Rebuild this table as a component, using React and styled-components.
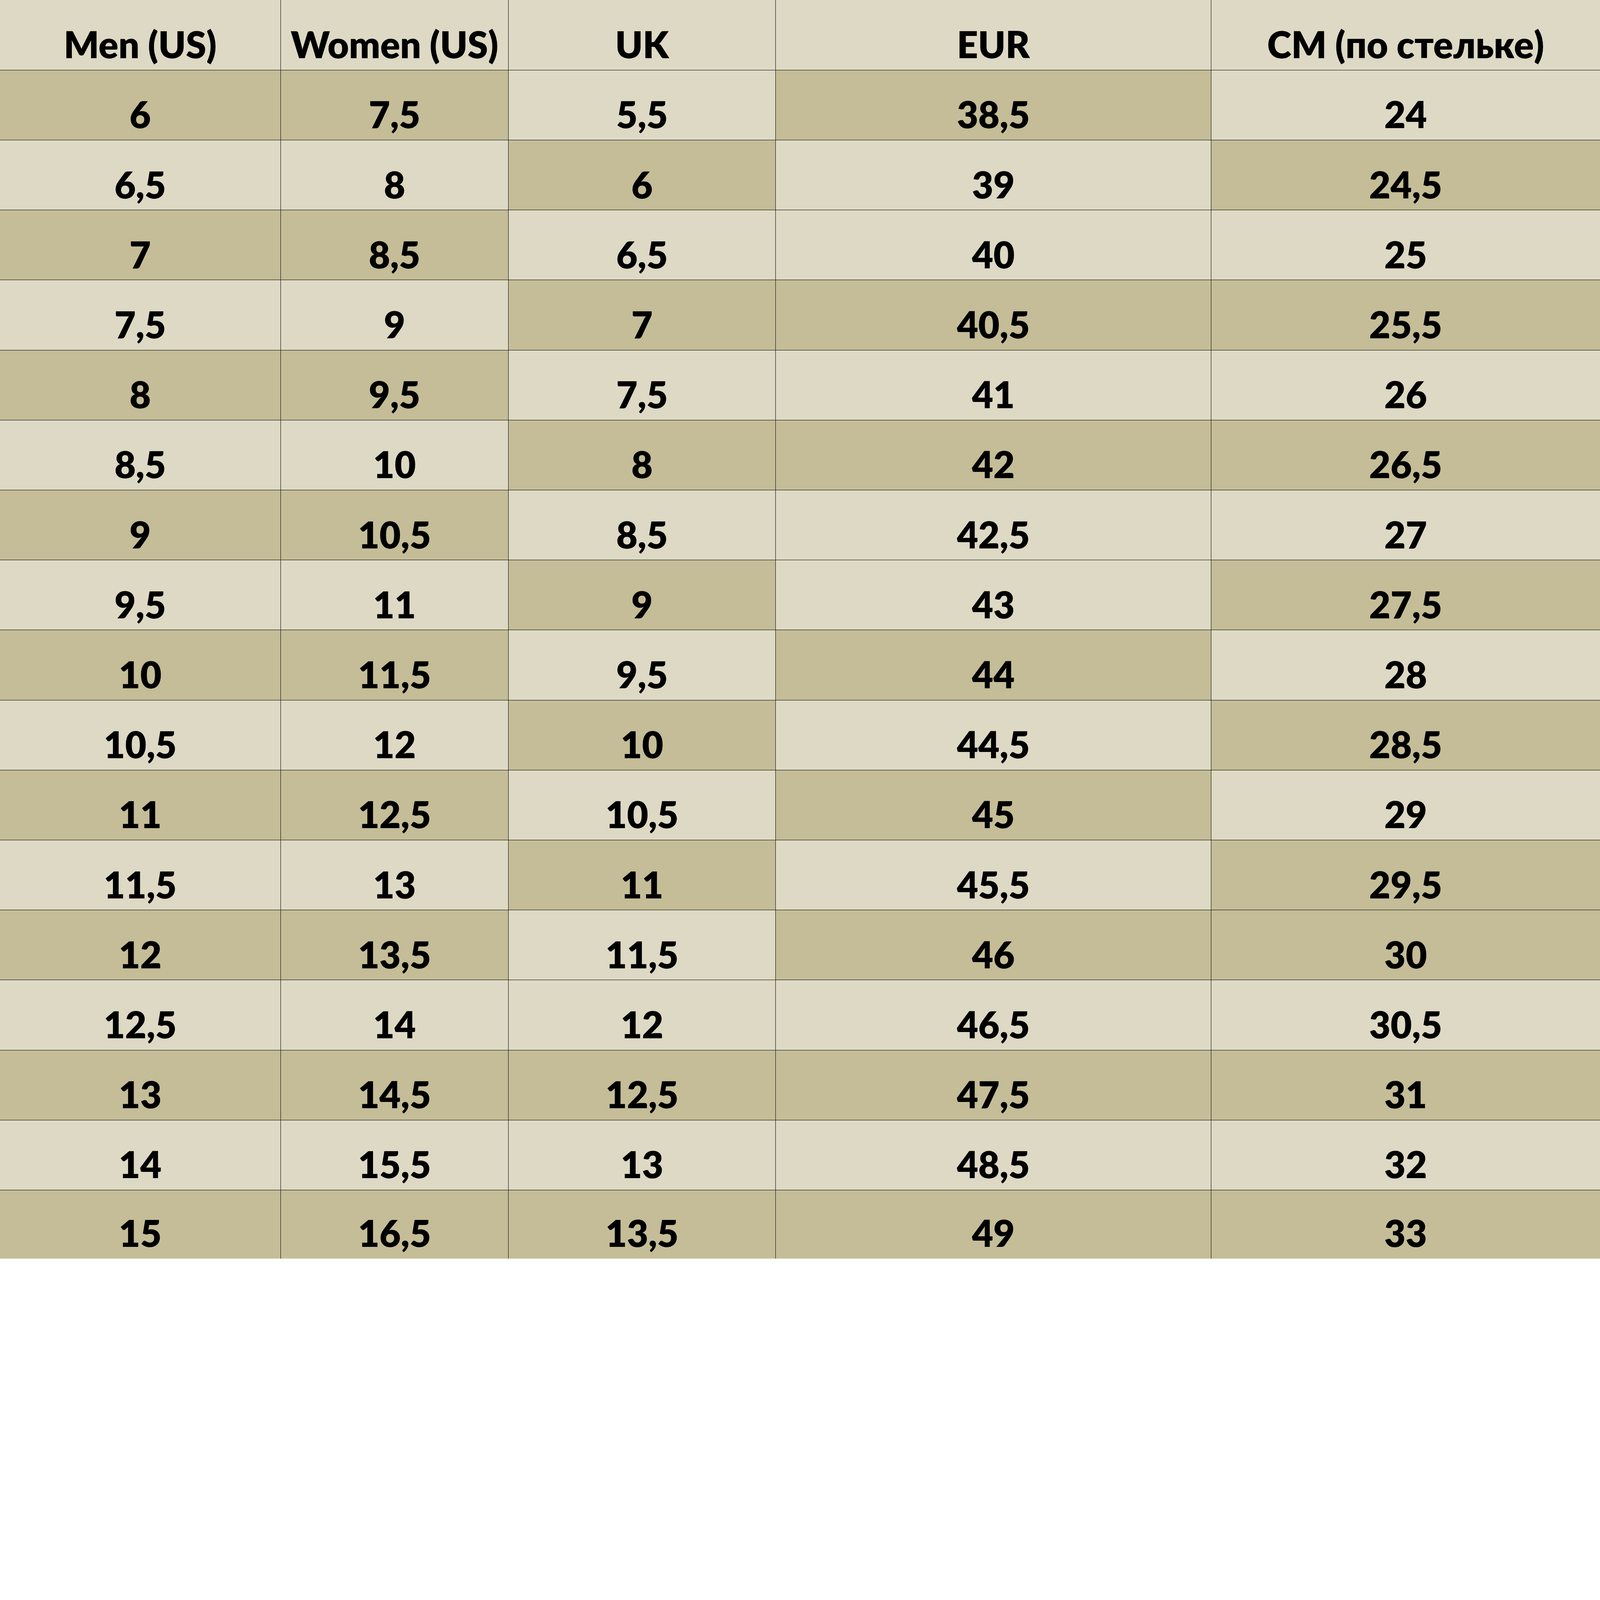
import React from "react";
import styled, { createGlobalStyle } from "styled-components";

const GlobalStyle = createGlobalStyle`
  html, body {
    margin: 0;
    padding: 0;
    background: #fff;
  }
  body {
    font-family: Lato, "Noto Sans", "DejaVu Sans", sans-serif;
  }
`;

const LIGHT = "#DDD9C4";
const DARK = "#C4BD97";

// ширины колонок как в исходной таблице (пропорции)
const Sheet = styled.div`
  display: grid;
  width: 100%;
  grid-template-columns: 1067fr 866fr 1015fr 1655fr 1477fr;
  grid-template-rows: 179.9px repeat(16, 179.2px) 175.2px;
`;

const Cell = styled.div`
  box-sizing: border-box;
  display: flex;
  align-items: flex-end;
  justify-content: center;
  min-width: 0;
  padding-bottom: 18.3px;
  background: ${(p) => (p.$dark ? DARK : LIGHT)};
  border-right: ${(p) => (p.$lastCol ? "none" : "1px solid #000")};
  border-bottom: ${(p) => (p.$lastRow ? "none" : "1px solid #000")};
  color: #000;
  font-family: Lato, "Noto Sans", sans-serif;
  font-weight: 800;
  font-size: 94.3px;
  line-height: 1;
  white-space: nowrap;
`;

const headers = ["Men (US)", "Women (US)", "UK", "EUR", "CM (по стельке)"];

const rows = [
  ["6", "7,5", "5,5", "38,5", "24"],
  ["6,5", "8", "6", "39", "24,5"],
  ["7", "8,5", "6,5", "40", "25"],
  ["7,5", "9", "7", "40,5", "25,5"],
  ["8", "9,5", "7,5", "41", "26"],
  ["8,5", "10", "8", "42", "26,5"],
  ["9", "10,5", "8,5", "42,5", "27"],
  ["9,5", "11", "9", "43", "27,5"],
  ["10", "11,5", "9,5", "44", "28"],
  ["10,5", "12", "10", "44,5", "28,5"],
  ["11", "12,5", "10,5", "45", "29"],
  ["11,5", "13", "11", "45,5", "29,5"],
  ["12", "13,5", "11,5", "46", "30"],
  ["12,5", "14", "12", "46,5", "30,5"],
  ["13", "14,5", "12,5", "47,5", "31"],
  ["14", "15,5", "13", "48,5", "32"],
  ["15", "16,5", "13,5", "49", "33"],
];

// D = тёмная ячейка, L = светлая
const shades = [
  "DDLDL",
  "LLDLD",
  "DDLLL",
  "LLDDD",
  "DDLLL",
  "LLDDD",
  "DDLLL",
  "LLDLD",
  "DDLDL",
  "LLDLD",
  "DDLDL",
  "LLDLD",
  "DDLDD",
  "LLLLL",
  "DDDDD",
  "LLLLL",
  "DDDDD",
];

const App = () => {
  return (
    <>
      <GlobalStyle />
      <Sheet>
        {headers.map((h, c) => (
          <Cell key={"h" + c} $lastCol={c === 4}>
            {h}
          </Cell>
        ))}
        {rows.map((row, r) =>
          row.map((v, c) => (
            <Cell
              key={r + "-" + c}
              $dark={shades[r][c] === "D"}
              $lastCol={c === 4}
              $lastRow={r === rows.length - 1}
            >
              {v}
            </Cell>
          ))
        )}
      </Sheet>
    </>
  );
};

export default App;
